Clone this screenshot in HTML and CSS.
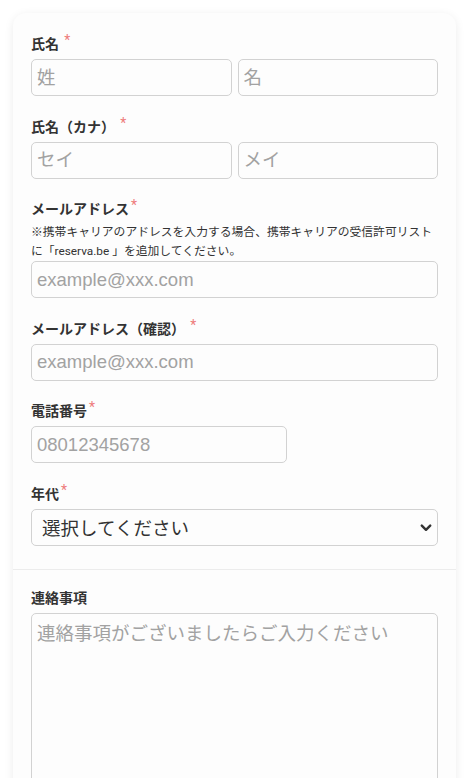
FILE: index.html
```html
<!DOCTYPE html>
<html lang="ja">
<head>
  <meta charset="UTF-8">
  <meta name="viewport" content="width=device-width, initial-scale=1.0">
  <title>予約フォーム</title>
  <link rel="stylesheet" href="styles.css">
</head>
<body>

  <div class="form-card">
    <div class="form-section">
      <div class="field">
        <label class="field-label">氏名 <span class="required">*</span></label>
        <div class="name-row">
          <input class="text-input" type="text" placeholder="姓">
          <input class="text-input" type="text" placeholder="名">
        </div>
      </div>

      <div class="field">
        <label class="field-label">氏名（カナ） <span class="required">*</span></label>
        <div class="name-row">
          <input class="text-input" type="text" placeholder="セイ">
          <input class="text-input" type="text" placeholder="メイ">
        </div>
      </div>

      <div class="field">
        <label class="field-label">メールアドレス<span class="required">*</span></label>
        <p class="field-note">※携帯キャリアのアドレスを入力する場合、携帯キャリアの受信許可リストに「reserva.be 」を追加してください。</p>
        <input class="text-input" type="email" placeholder="example@xxx.com">
      </div>

      <div class="field">
        <label class="field-label">メールアドレス（確認） <span class="required">*</span></label>
        <input class="text-input" type="email" placeholder="example@xxx.com">
      </div>

      <div class="field">
        <label class="field-label">電話番号<span class="required">*</span></label>
        <input class="text-input phone-input" type="tel" placeholder="08012345678">
      </div>

      <div class="field">
        <label class="field-label">年代<span class="required">*</span></label>
        <div class="select-wrap">
          <select class="select-input">
            <option>選択してください</option>
            <option>10代</option>
            <option>20代</option>
            <option>30代</option>
            <option>40代</option>
            <option>50代以上</option>
          </select>
          <svg class="select-arrow" width="12" height="8" viewBox="0 0 12 8">
            <path d="M1.8 1.6 L6 5.8 L10.2 1.6" fill="none" stroke="#333" stroke-width="2.4" stroke-linecap="round" stroke-linejoin="round"/>
          </svg>
        </div>
      </div>
    </div>

    <div class="form-section">
      <div class="field">
        <label class="field-label">連絡事項</label>
        <textarea class="text-area" placeholder="連絡事項がございましたらご入力ください"></textarea>
      </div>
    </div>
  </div>

</body>
</html>
```

FILE: styles.css
```css
body {
  margin: 0;
  padding: 13px 12px 0 13px;
  background-color: #ffffff;
  font-family: Roboto, "Noto Sans CJK JP", sans-serif;
  color: #333333;
  overflow: hidden;
}

.form-card {
  background-color: #fdfdfd;
  border-radius: 13px 13px 0 0;
  box-shadow: 0px 2px 10px rgba(0, 0, 0, 0.08);
}

.form-section {
  padding: 19px 18px 23px 18px;
}

.form-section + .form-section {
  border-top: 1px solid #ececec;
  padding-top: 16px;
}

.field {
  margin-bottom: 18.5px;
}

.field:last-child {
  margin-bottom: 0;
}

.field-label {
  display: block;
  height: 22px;
  font-family: "Noto Sans CJK JP", sans-serif;
  font-size: 14px;
  font-weight: bold;
  line-height: 22px;
  margin-bottom: 5px;
  color: #333333;
}

.required {
  color: #ee7b7b;
  font-family: Roboto, sans-serif;
  font-weight: normal;
  font-size: 14px;
  line-height: 0;
  margin-left: 2px;
  vertical-align: 4px;
}

.field-note {
  margin: -1px 0 0 0;
  font-size: 11.8px;
  line-height: 19px;
  color: #333333;
}

.name-row {
  display: flex;
  gap: 6px;
}

.text-input,
.select-input,
.text-area {
  box-sizing: border-box;
  display: block;
  width: 100%;
  height: 37px;
  border: 1px solid #d2d2d2;
  border-radius: 5px;
  background-color: #fdfdfd;
  font-family: "Liberation Sans", "Noto Sans CJK JP", sans-serif;
  font-size: 18.5px;
  color: #333333;
  padding: 0 5px;
  outline: none;
}

.text-input::placeholder,
.text-area::placeholder {
  color: #a2a2a2;
}

.phone-input {
  width: 256px;
}

.select-wrap {
  position: relative;
}

.select-input {
  appearance: none;
  -webkit-appearance: none;
  padding-left: 10px;
  font-family: "Noto Sans CJK JP", sans-serif;
}

.select-arrow {
  position: absolute;
  right: 6px;
  top: 15px;
  pointer-events: none;
}

.text-area {
  height: 200px;
  padding: 6px 5px;
  resize: none;
  font-family: "Noto Sans CJK JP", sans-serif;
  line-height: 1.4;
}
```
